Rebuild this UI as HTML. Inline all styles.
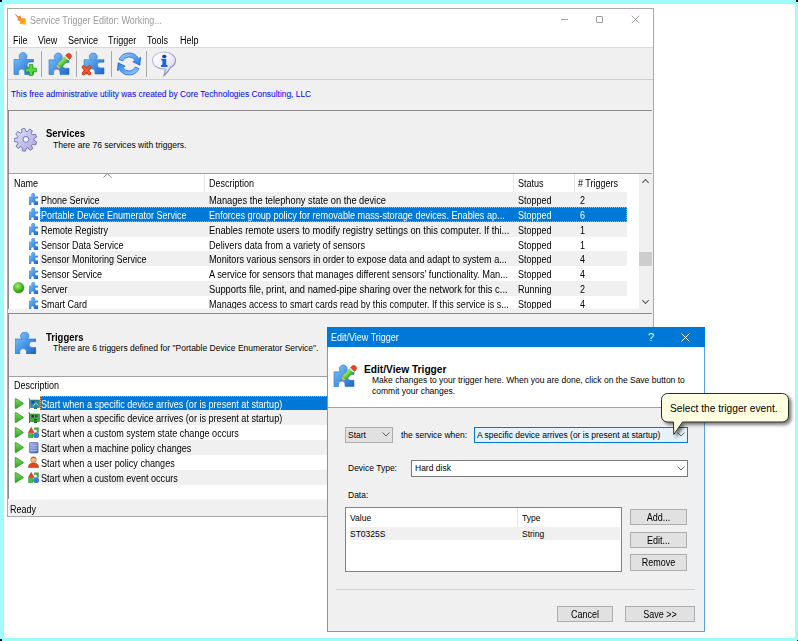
<!DOCTYPE html>
<html><head><meta charset="utf-8">
<style>
*{box-sizing:border-box}
html,body{margin:0;padding:0}
body{width:798px;height:641px;position:relative;overflow:hidden;background:#9ffcfc;font-family:"Liberation Sans",sans-serif;font-size:9px;color:#000}
.a{position:absolute}
.t{position:absolute;white-space:pre;line-height:15px;height:15px;transform-origin:0 0}
.bt{position:absolute;background:#e1e1e1;border:1px solid #adadad}
.bt span{position:absolute;left:0;right:0;top:0;text-align:center;white-space:pre;line-height:15px;font-size:10px;transform:scaleX(.9)}
</style></head>
<body>
<svg width="0" height="0" style="position:absolute">
<defs>
<linearGradient id="pz" x1="0" y1="0" x2="1" y2="1">
<stop offset="0" stop-color="#8cc8f8"/><stop offset="0.5" stop-color="#4a98e8"/><stop offset="1" stop-color="#1c64c8"/>
</linearGradient>
<radialGradient id="grn" cx="0.4" cy="0.35" r="0.65">
<stop offset="0" stop-color="#a8f070"/><stop offset="0.6" stop-color="#4cc020"/><stop offset="1" stop-color="#2a8a10"/>
</radialGradient>
<linearGradient id="play" x1="0" y1="0" x2="0" y2="1">
<stop offset="0" stop-color="#80e060"/><stop offset="1" stop-color="#2aa020"/>
</linearGradient>
<linearGradient id="pen" x1="0" y1="0" x2="0" y2="1">
<stop offset="0" stop-color="#9cf070"/><stop offset="1" stop-color="#3cb020"/>
</linearGradient>
<linearGradient id="srv" x1="0" y1="0" x2="1" y2="1">
<stop offset="0" stop-color="#a8b8e8"/><stop offset="1" stop-color="#5068b0"/>
</linearGradient>
<linearGradient id="rf" x1="0" y1="0" x2="1" y2="1">
<stop offset="0" stop-color="#9cd0ff"/><stop offset="1" stop-color="#2a7ae0"/>
</linearGradient>
<linearGradient id="ib" x1="0" y1="0" x2="1" y2="1">
<stop offset="0" stop-color="#ffffff"/><stop offset="0.5" stop-color="#f0f0fc"/><stop offset="1" stop-color="#c4c4e8"/>
</linearGradient>
<linearGradient id="ibs" x1="0" y1="0" x2="1" y2="1">
<stop offset="0" stop-color="#c8c8ec"/><stop offset="0.6" stop-color="#a0a0c8"/><stop offset="1" stop-color="#6a6a78"/>
</linearGradient>
<linearGradient id="gr" x1="0" y1="0" x2="1" y2="1">
<stop offset="0" stop-color="#e0e0f8"/><stop offset="1" stop-color="#a8a8dc"/>
</linearGradient>
</defs></svg>
<div class="a" style="left:4px;top:4px;width:791px;height:634px;background:#fff;border-radius:3px"></div>
<div class="a" style="left:0;top:0;width:2px;height:2px;background:#000"></div>
<div class="a" style="left:796px;top:0;width:2px;height:2px;background:#000"></div>
<div class="a" style="left:0;top:639px;width:2px;height:2px;background:#000"></div>
<div class="a" style="left:797px;top:640px;width:1px;height:1px;background:#000"></div>
<div class="a" style="left:7px;top:8px;width:647px;height:509px;border:1px solid #a9a9a9;background:#f0f0f0"></div>
<div class="a" style="left:8px;top:9px;width:645px;height:38px;background:#fff;"></div>
<svg class="a" style="left:14px;top:13px" width="13" height="13" viewBox="0 0 13 13"><defs><linearGradient id="ap" x1="0" y1="0" x2="1" y2="1"><stop offset="0" stop-color="#ff4a1a"/><stop offset="0.5" stop-color="#ff8a20"/><stop offset="1" stop-color="#ffc000"/></linearGradient></defs><path d="M0.5,0.5 L4.5,3.6 L6.2,2.6 L7.2,5.2 L11.8,5.4 L11.8,11.8 L5.2,10.4 L6.6,8.8 L3.2,6.8 L4.2,5.4 Z" fill="url(#ap)"/></svg>
<div class="t" style="left:30px;top:13px;font-size:10px;transform:scaleX(0.9);color:#9a9a9a;">Service Trigger Editor: Working...</div>
<div class="t" style="left:13px;top:33px;font-size:10px;transform:scaleX(0.9);">File</div>
<div class="t" style="left:38px;top:33px;font-size:10px;transform:scaleX(0.9);">View</div>
<div class="t" style="left:68px;top:33px;font-size:10px;transform:scaleX(0.9);">Service</div>
<div class="t" style="left:108px;top:33px;font-size:10px;transform:scaleX(0.9);">Trigger</div>
<div class="t" style="left:147px;top:33px;font-size:10px;transform:scaleX(0.9);">Tools</div>
<div class="t" style="left:180px;top:33px;font-size:10px;transform:scaleX(0.9);">Help</div>
<div class="a" style="left:561px;top:19px;width:7px;height:1px;background:#a0a0a0;"></div>
<div class="a" style="left:596px;top:16px;width:7px;height:7px;border:1px solid #a0a0a0;border-radius:1px"></div>
<svg class="a" style="left:631px;top:15px" width="9" height="9"><path d="M0.8,0.8L8.2,8.2M8.2,0.8L0.8,8.2" stroke="#909090" stroke-width="0.9"/></svg>
<div class="a" style="left:8px;top:47px;width:645px;height:1px;background:#d9d9d9;"></div>
<div class="a" style="left:8px;top:79px;width:645px;height:1px;background:#d0d0d0;"></div>
<div class="a" style="left:41px;top:51px;width:1px;height:26px;background:#a8a8a8;"></div>
<div class="a" style="left:76px;top:51px;width:1px;height:26px;background:#a8a8a8;"></div>
<div class="a" style="left:111px;top:51px;width:1px;height:26px;background:#a8a8a8;"></div>
<div class="a" style="left:146px;top:51px;width:1px;height:26px;background:#a8a8a8;"></div>
<svg class="a" style="left:10px;top:48px" width="32" height="32" viewBox="0 0 32 32"><path transform="translate(4,4.5) scale(0.975,1.000)" d="M0,7 H6.6 A4,4 0 1 1 11.9,7 H20 V9.6 H16.4 A3,3 0 0 0 16.4,15.6 H20 V22 H11 V19.75 A3.25,3.25 0 0 0 4.5,19.75 V22 H0 Z" fill="url(#pz)" stroke="#2a6fc9" stroke-width="0.6"/><path d="M19.2,16.6 h3.6 v3.6 h3.6 v3.6 h-3.6 v3.6 h-3.6 v-3.6 h-3.6 v-3.6 h3.6 z" fill="#5ad83a" stroke="#1e9a1e" stroke-width="0.8" stroke-linejoin="round"/></svg>
<svg class="a" style="left:44px;top:48px" width="32" height="32" viewBox="0 0 32 32"><path transform="translate(5,5) scale(1.000,0.977)" d="M0,7 H6.6 A4,4 0 1 1 11.9,7 H20 V9.6 H16.4 A3,3 0 0 0 16.4,15.6 H20 V22 H11 V19.75 A3.25,3.25 0 0 0 4.5,19.75 V22 H0 Z" fill="url(#pz)" stroke="#2a6fc9" stroke-width="0.6"/><g transform="translate(12.3,20.7) rotate(-45)"><path d="M0,0 L4,-2.7 L4,2.7 Z" fill="#d8b478"/><path d="M0,0 L1.4,-0.95 L1.4,0.95 Z" fill="#505050"/><rect x="4" y="-2.7" width="10.2" height="5.4" fill="url(#pen)" stroke="#2a8a1e" stroke-width="0.4"/><rect x="14.2" y="-2.7" width="1.6" height="5.4" fill="#e8e8e8"/><path d="M15.8,-2.8 H17.6 A2.8,2.8 0 0 1 17.6,2.8 H15.8 Z" fill="#e4461c" stroke="#b83010" stroke-width="0.4"/></g></svg>
<svg class="a" style="left:78px;top:48px" width="32" height="32" viewBox="0 0 32 32"><path transform="translate(6,5) scale(1.000,0.955)" d="M0,7 H6.6 A4,4 0 1 1 11.9,7 H20 V9.6 H16.4 A3,3 0 0 0 16.4,15.6 H20 V22 H11 V19.75 A3.25,3.25 0 0 0 4.5,19.75 V22 H0 Z" fill="url(#pz)" stroke="#2a6fc9" stroke-width="0.6"/><path d="M5.5,19 L11.5,25.5 M11.5,19 L5.5,25.5" stroke="#b82a10" stroke-width="3.4" stroke-linecap="round"/><path d="M5.5,19 L11.5,25.5 M11.5,19 L5.5,25.5" stroke="#f45a24" stroke-width="2.2" stroke-linecap="round"/></svg>
<svg class="a" style="left:113px;top:48px" width="32" height="32" viewBox="0 0 32 32"><path d="M6.03,11.35 A11,11 0 0 1 25.5,10.5 L27.6,9.3 L26.8,17.2 L19.8,13.8 L22.06,12.5 A7,7 0 0 0 9.66,13.04 Z" fill="url(#rf)" stroke="#1f6ad8" stroke-width="0.8" stroke-linejoin="round"/><g transform="rotate(180 16 16)"><path d="M6.03,11.35 A11,11 0 0 1 25.5,10.5 L27.6,9.3 L26.8,17.2 L19.8,13.8 L22.06,12.5 A7,7 0 0 0 9.66,13.04 Z" fill="url(#rf)" stroke="#1f6ad8" stroke-width="0.8" stroke-linejoin="round"/></g></svg>
<svg class="a" style="left:148px;top:48px" width="32" height="32" viewBox="0 0 32 32"><path d="M16,4 C22.5,4 27.5,7.8 27.5,12.5 C27.5,15.5 25.5,18 22.5,19.5 C21,22.5 18.5,25.5 16,27.5 C17,25 17.5,23 17,21 L16,21 C9.5,21 4.5,17.2 4.5,12.5 C4.5,7.8 9.5,4 16,4 Z" fill="url(#ib)" stroke="url(#ibs)" stroke-width="1.1"/><ellipse cx="16.3" cy="8.4" rx="2.2" ry="1.6" fill="#1a3aa0"/><path d="M13.2,10.8 H18.2 V17 H19.5 V19 H13 V17 H14.4 V12.6 H13.2 Z" fill="#1a66e0"/></svg>
<div class="t" style="left:11px;top:87px;font-size:8.4px;color:#0000f0;">This free administrative utility was created by Core Technologies Consulting, LLC</div>
<div class="a" style="left:8px;top:110px;width:644px;height:1px;background:#8c8c8c;"></div>
<div class="a" style="left:8px;top:110px;width:1px;height:199px;background:#8c8c8c;"></div>
<svg class="a" style="left:14px;top:128px" width="24" height="24" viewBox="0 0 24 24"><path d="M7.84,4.24 L7.70,1.05 L10.81,0.42 L11.93,3.41 L13.55,3.65 L15.50,1.12 L18.29,2.64 L17.22,5.65 L18.31,6.88 L21.43,6.19 L22.59,9.15 L19.84,10.77 L19.88,12.41 L22.71,13.89 L21.70,16.89 L18.55,16.37 L17.53,17.65 L18.75,20.60 L16.04,22.26 L13.96,19.83 L12.36,20.16 L11.39,23.20 L8.25,22.73 L8.23,19.54 L6.79,18.75 L4.09,20.46 L1.99,18.09 L4.02,15.62 L3.42,14.10 L0.26,13.67 L0.17,10.50 L3.31,9.92 L3.83,8.36 L1.68,6.01 L3.66,3.53 L6.44,5.10 Z" fill="url(#gr)" stroke="#6a6ab0" stroke-width="0.9" stroke-linejoin="round"/><circle cx="11.9" cy="11.4" r="2.9" fill="#f4f4f8" stroke="#6a6ab0" stroke-width="0.9"/></svg>
<div class="t" style="left:46px;top:126px;font-size:10px;transform:scaleX(0.95);font-weight:bold;">Services</div>
<div class="t" style="left:53px;top:138px;font-size:8.55px;">There are 76 services with triggers.</div>
<div class="a" style="left:9px;top:173px;width:643px;height:1px;background:#a0a0a0;"></div>
<div class="a" style="left:9px;top:174px;width:630px;height:135px;background:#fff;"></div>
<div class="a" style="left:639px;top:174px;width:13px;height:135px;background:#f0f0f0;"></div>
<div class="a" style="left:639px;top:252px;width:13px;height:14px;background:#cdcdcd;"></div>
<svg class="a" style="left:641px;top:178px" width="9" height="7"><path d="M1.3,4.8 L4.5,1.6 L7.7,4.8" fill="none" stroke="#606060" stroke-width="1.2"/></svg>
<svg class="a" style="left:641px;top:299px" width="9" height="7"><path d="M1.3,1.2 L4.5,4.4 L7.7,1.2" fill="none" stroke="#606060" stroke-width="1.2"/></svg>
<div class="a" style="left:204px;top:174px;width:1px;height:18px;background:#e5e5e5;"></div>
<div class="a" style="left:513px;top:174px;width:1px;height:18px;background:#e5e5e5;"></div>
<div class="a" style="left:574px;top:174px;width:1px;height:18px;background:#e5e5e5;"></div>
<svg class="a" style="left:103px;top:173px" width="9" height="5"><path d="M0.5,4.5 L4.5,0.8 L8.5,4.5" fill="none" stroke="#808080" stroke-width="1"/></svg>
<div class="t" style="left:14px;top:176px;font-size:10px;transform:scaleX(0.9);">Name</div>
<div class="t" style="left:209px;top:176px;font-size:10px;transform:scaleX(0.9);">Description</div>
<div class="t" style="left:518px;top:176px;font-size:10px;transform:scaleX(0.9);">Status</div>
<div class="t" style="left:578px;top:176px;font-size:10px;transform:scaleX(0.9);"># Triggers</div>
<div class="a" style="left:40px;top:192px;width:587px;height:15px;background:#f0f0f0;"></div>
<svg class="a" style="left:29px;top:193px" width="9" height="12" viewBox="0 0 20 22" preserveAspectRatio="none"><path d="M0,7 H6.6 A4,4 0 1 1 11.9,7 H20 V9.6 H16.4 A3,3 0 0 0 16.4,15.6 H20 V22 H11 V19.75 A3.25,3.25 0 0 0 4.5,19.75 V22 H0 Z" fill="url(#pz)" stroke="#2a6fc9" stroke-width="0.6"/></svg>
<div class="t" style="left:41px;top:193px;font-size:10px;transform:scaleX(0.9);">Phone Service</div>
<div class="t" style="left:209px;top:193px;font-size:10px;transform:scaleX(0.9279);">Manages the telephony state on the device</div>
<div class="t" style="left:518px;top:193px;font-size:10px;transform:scaleX(0.9);">Stopped</div>
<div class="t" style="left:580px;top:193px;font-size:10px;transform:scaleX(0.9);">2</div>
<div class="a" style="left:40px;top:207px;width:587px;height:15px;background:#0078d7;border:1px dotted #e0a060"></div>
<svg class="a" style="left:29px;top:208px" width="9" height="12" viewBox="0 0 20 22" preserveAspectRatio="none"><path d="M0,7 H6.6 A4,4 0 1 1 11.9,7 H20 V9.6 H16.4 A3,3 0 0 0 16.4,15.6 H20 V22 H11 V19.75 A3.25,3.25 0 0 0 4.5,19.75 V22 H0 Z" fill="url(#pz)" stroke="#2a6fc9" stroke-width="0.6"/></svg>
<div class="t" style="left:41px;top:208px;font-size:10px;transform:scaleX(0.9);color:#fff;">Portable Device Enumerator Service</div>
<div class="t" style="left:209px;top:208px;font-size:10px;transform:scaleX(0.9126000000000001);color:#fff;">Enforces group policy for removable mass-storage devices. Enables ap...</div>
<div class="t" style="left:518px;top:208px;font-size:10px;transform:scaleX(0.9);color:#fff;">Stopped</div>
<div class="t" style="left:580px;top:208px;font-size:10px;transform:scaleX(0.9);color:#fff;">6</div>
<div class="a" style="left:40px;top:222px;width:587px;height:15px;background:#f0f0f0;"></div>
<svg class="a" style="left:29px;top:223px" width="9" height="12" viewBox="0 0 20 22" preserveAspectRatio="none"><path d="M0,7 H6.6 A4,4 0 1 1 11.9,7 H20 V9.6 H16.4 A3,3 0 0 0 16.4,15.6 H20 V22 H11 V19.75 A3.25,3.25 0 0 0 4.5,19.75 V22 H0 Z" fill="url(#pz)" stroke="#2a6fc9" stroke-width="0.6"/></svg>
<div class="t" style="left:41px;top:223px;font-size:10px;transform:scaleX(0.9);">Remote Registry</div>
<div class="t" style="left:209px;top:223px;font-size:10px;transform:scaleX(0.9315);">Enables remote users to modify registry settings on this computer. If thi...</div>
<div class="t" style="left:518px;top:223px;font-size:10px;transform:scaleX(0.9);">Stopped</div>
<div class="t" style="left:580px;top:223px;font-size:10px;transform:scaleX(0.9);">1</div>
<svg class="a" style="left:29px;top:238px" width="9" height="12" viewBox="0 0 20 22" preserveAspectRatio="none"><path d="M0,7 H6.6 A4,4 0 1 1 11.9,7 H20 V9.6 H16.4 A3,3 0 0 0 16.4,15.6 H20 V22 H11 V19.75 A3.25,3.25 0 0 0 4.5,19.75 V22 H0 Z" fill="url(#pz)" stroke="#2a6fc9" stroke-width="0.6"/></svg>
<div class="t" style="left:41px;top:238px;font-size:10px;transform:scaleX(0.9);">Sensor Data Service</div>
<div class="t" style="left:209px;top:238px;font-size:10px;transform:scaleX(0.9144);">Delivers data from a variety of sensors</div>
<div class="t" style="left:518px;top:238px;font-size:10px;transform:scaleX(0.9);">Stopped</div>
<div class="t" style="left:580px;top:238px;font-size:10px;transform:scaleX(0.9);">1</div>
<div class="a" style="left:40px;top:251px;width:587px;height:15px;background:#f0f0f0;"></div>
<svg class="a" style="left:29px;top:252px" width="9" height="12" viewBox="0 0 20 22" preserveAspectRatio="none"><path d="M0,7 H6.6 A4,4 0 1 1 11.9,7 H20 V9.6 H16.4 A3,3 0 0 0 16.4,15.6 H20 V22 H11 V19.75 A3.25,3.25 0 0 0 4.5,19.75 V22 H0 Z" fill="url(#pz)" stroke="#2a6fc9" stroke-width="0.6"/></svg>
<div class="t" style="left:41px;top:252px;font-size:10px;transform:scaleX(0.9);">Sensor Monitoring Service</div>
<div class="t" style="left:209px;top:252px;font-size:10px;transform:scaleX(0.9144);">Monitors various sensors in order to expose data and adapt to system a...</div>
<div class="t" style="left:518px;top:252px;font-size:10px;transform:scaleX(0.9);">Stopped</div>
<div class="t" style="left:580px;top:252px;font-size:10px;transform:scaleX(0.9);">4</div>
<svg class="a" style="left:29px;top:267px" width="9" height="12" viewBox="0 0 20 22" preserveAspectRatio="none"><path d="M0,7 H6.6 A4,4 0 1 1 11.9,7 H20 V9.6 H16.4 A3,3 0 0 0 16.4,15.6 H20 V22 H11 V19.75 A3.25,3.25 0 0 0 4.5,19.75 V22 H0 Z" fill="url(#pz)" stroke="#2a6fc9" stroke-width="0.6"/></svg>
<div class="t" style="left:41px;top:267px;font-size:10px;transform:scaleX(0.9);">Sensor Service</div>
<div class="t" style="left:209px;top:267px;font-size:10px;transform:scaleX(0.9260999999999999);">A service for sensors that manages different sensors' functionality. Man...</div>
<div class="t" style="left:518px;top:267px;font-size:10px;transform:scaleX(0.9);">Stopped</div>
<div class="t" style="left:580px;top:267px;font-size:10px;transform:scaleX(0.9);">4</div>
<div class="a" style="left:40px;top:281px;width:587px;height:15px;background:#f0f0f0;"></div>
<svg class="a" style="left:29px;top:282px" width="9" height="12" viewBox="0 0 20 22" preserveAspectRatio="none"><path d="M0,7 H6.6 A4,4 0 1 1 11.9,7 H20 V9.6 H16.4 A3,3 0 0 0 16.4,15.6 H20 V22 H11 V19.75 A3.25,3.25 0 0 0 4.5,19.75 V22 H0 Z" fill="url(#pz)" stroke="#2a6fc9" stroke-width="0.6"/></svg>
<svg class="a" style="left:13px;top:282px" width="12" height="12" viewBox="0 0 12 12"><circle cx="5.7" cy="5.7" r="5.3" fill="url(#grn)" stroke="#3a9a20" stroke-width="0.5"/></svg>
<div class="t" style="left:41px;top:282px;font-size:10px;transform:scaleX(0.9);">Server</div>
<div class="t" style="left:209px;top:282px;font-size:10px;transform:scaleX(0.9342);">Supports file, print, and named-pipe sharing over the network for this c...</div>
<div class="t" style="left:518px;top:282px;font-size:10px;transform:scaleX(0.9);">Running</div>
<div class="t" style="left:580px;top:282px;font-size:10px;transform:scaleX(0.9);">2</div>
<svg class="a" style="left:29px;top:297px" width="9" height="12" viewBox="0 0 20 22" preserveAspectRatio="none"><path d="M0,7 H6.6 A4,4 0 1 1 11.9,7 H20 V9.6 H16.4 A3,3 0 0 0 16.4,15.6 H20 V22 H11 V19.75 A3.25,3.25 0 0 0 4.5,19.75 V22 H0 Z" fill="url(#pz)" stroke="#2a6fc9" stroke-width="0.6"/></svg>
<div class="t" style="left:41px;top:297px;font-size:10px;transform:scaleX(0.9);">Smart Card</div>
<div class="t" style="left:209px;top:297px;font-size:10px;transform:scaleX(0.9098999999999999);">Manages access to smart cards read by this computer. If this service is s...</div>
<div class="t" style="left:518px;top:297px;font-size:10px;transform:scaleX(0.9);">Stopped</div>
<div class="t" style="left:580px;top:297px;font-size:10px;transform:scaleX(0.9);">4</div>
<div class="a" style="left:9px;top:309px;width:643px;height:4px;background:#f0f0f0;"></div>
<div class="a" style="left:8px;top:313px;width:644px;height:1px;background:#8c8c8c;"></div>
<div class="a" style="left:8px;top:313px;width:1px;height:186px;background:#8c8c8c;"></div>
<svg class="a" style="left:15px;top:332px" width="21" height="22" viewBox="0 0 20 22" preserveAspectRatio="none"><path d="M0,7 H6.6 A4,4 0 1 1 11.9,7 H20 V9.6 H16.4 A3,3 0 0 0 16.4,15.6 H20 V22 H11 V19.75 A3.25,3.25 0 0 0 4.5,19.75 V22 H0 Z" fill="url(#pz)" stroke="#2a6fc9" stroke-width="0.6"/></svg>
<div class="t" style="left:46px;top:330px;font-size:10px;transform:scaleX(0.95);font-weight:bold;">Triggers</div>
<div class="t" style="left:53px;top:341px;font-size:8.5px;">There are 6 triggers defined for "Portable Device Enumerator Service".</div>
<div class="a" style="left:9px;top:376px;width:643px;height:1px;background:#a0a0a0;"></div>
<div class="a" style="left:9px;top:377px;width:643px;height:122px;background:#fff;"></div>
<div class="t" style="left:14px;top:378px;font-size:10px;transform:scaleX(0.9);">Description</div>
<div class="a" style="left:40px;top:396px;width:290px;height:15px;background:#0078d7;border:1px dotted #e0a060;border-right:none"></div>
<svg class="a" style="left:14px;top:398px" width="10" height="11" viewBox="0 0 10 11"><path d="M1.2,1 Q1.2,0.2 2,0.6 L9,5 Q9.6,5.5 9,6 L2,10.4 Q1.2,10.8 1.2,10 Z" fill="url(#play)" stroke="#2a8a1a" stroke-width="0.7"/></svg>
<div class="t" style="left:41px;top:397px;font-size:10px;transform:scaleX(0.908);color:#fff;">Start when a specific device arrives (or is present at startup)</div>
<div class="a" style="left:40px;top:410px;width:290px;height:15px;background:#f0f0f0;"></div>
<svg class="a" style="left:14px;top:412px" width="10" height="11" viewBox="0 0 10 11"><path d="M1.2,1 Q1.2,0.2 2,0.6 L9,5 Q9.6,5.5 9,6 L2,10.4 Q1.2,10.8 1.2,10 Z" fill="url(#play)" stroke="#2a8a1a" stroke-width="0.7"/></svg>
<div class="t" style="left:41px;top:411px;font-size:10px;transform:scaleX(0.908);">Start when a specific device arrives (or is present at startup)</div>
<svg class="a" style="left:14px;top:427px" width="10" height="11" viewBox="0 0 10 11"><path d="M1.2,1 Q1.2,0.2 2,0.6 L9,5 Q9.6,5.5 9,6 L2,10.4 Q1.2,10.8 1.2,10 Z" fill="url(#play)" stroke="#2a8a1a" stroke-width="0.7"/></svg>
<div class="t" style="left:41px;top:426px;font-size:10px;transform:scaleX(0.908);">Start when a custom system state change occurs</div>
<div class="a" style="left:40px;top:440px;width:290px;height:15px;background:#f0f0f0;"></div>
<svg class="a" style="left:14px;top:442px" width="10" height="11" viewBox="0 0 10 11"><path d="M1.2,1 Q1.2,0.2 2,0.6 L9,5 Q9.6,5.5 9,6 L2,10.4 Q1.2,10.8 1.2,10 Z" fill="url(#play)" stroke="#2a8a1a" stroke-width="0.7"/></svg>
<div class="t" style="left:41px;top:441px;font-size:10px;transform:scaleX(0.908);">Start when a machine policy changes</div>
<svg class="a" style="left:14px;top:457px" width="10" height="11" viewBox="0 0 10 11"><path d="M1.2,1 Q1.2,0.2 2,0.6 L9,5 Q9.6,5.5 9,6 L2,10.4 Q1.2,10.8 1.2,10 Z" fill="url(#play)" stroke="#2a8a1a" stroke-width="0.7"/></svg>
<div class="t" style="left:41px;top:456px;font-size:10px;transform:scaleX(0.908);">Start when a user policy changes</div>
<div class="a" style="left:40px;top:470px;width:290px;height:15px;background:#f0f0f0;"></div>
<svg class="a" style="left:14px;top:472px" width="10" height="11" viewBox="0 0 10 11"><path d="M1.2,1 Q1.2,0.2 2,0.6 L9,5 Q9.6,5.5 9,6 L2,10.4 Q1.2,10.8 1.2,10 Z" fill="url(#play)" stroke="#2a8a1a" stroke-width="0.7"/></svg>
<div class="t" style="left:41px;top:471px;font-size:10px;transform:scaleX(0.908);">Start when a custom event occurs</div>
<svg class="a" style="left:28px;top:398px" width="12" height="12" viewBox="0 0 12 12"><path d="M0.3,0.5 H2 V11 H1 V1.3 H0.3 Z" fill="#3a8ae0"/><rect x="2.5" y="2" width="9" height="7.6" fill="#2a8c96" stroke="#1a5a7a" stroke-width="0.5"/><rect x="3.5" y="3" width="3" height="2.5" fill="#204aa0"/><path d="M5,8.5 L7.5,5 L10.5,7.5" stroke="#a8e0f0" fill="none" stroke-width="0.9"/><rect x="6" y="9.6" width="3" height="1.4" fill="#1a6a6a"/></svg>
<svg class="a" style="left:28px;top:412px" width="12" height="12" viewBox="0 0 12 12"><path d="M0.3,0.5 H2 V11 H1 V1.3 H0.3 Z" fill="#606060"/><rect x="2.5" y="2" width="9" height="7.6" fill="#3cb03c" stroke="#1a6a1a" stroke-width="0.5"/><rect x="3.5" y="3" width="2.4" height="2.4" fill="#402050"/><rect x="7" y="3" width="2.4" height="2.4" fill="#603070"/><path d="M6,7 h3 v1.5 h-3 z" fill="#186018"/><rect x="6" y="9.6" width="3" height="1.4" fill="#186018"/></svg>
<svg class="a" style="left:28px;top:427px" width="11" height="11" viewBox="0 0 11 11"><path d="M3.2,0.3 L6.2,5.8 L0.2,5.8 Z" fill="#e8401c" stroke="#a02010" stroke-width="0.4"/><path d="M6.5,0.8 h4 v4.5 h-1.5 v-2.5 h-2.5 z" fill="#44c030" stroke="#1a7a1a" stroke-width="0.4"/><path d="M0.5,6.5 h4.5 v4.3 h-4.5 z" fill="#3cc03c" stroke="#1a7a1a" stroke-width="0.4"/><circle cx="8.2" cy="8.3" r="2.7" fill="#3a80e0" stroke="#1a50a0" stroke-width="0.4"/></svg>
<svg class="a" style="left:29px;top:442px" width="10" height="12" viewBox="0 0 10 12"><rect x="0.5" y="0.5" width="8.6" height="10.6" rx="1" fill="url(#srv)" stroke="#4a5a98" stroke-width="0.6"/><path d="M1.5,3.6 H8.3 M1.5,6 H8.3 M1.5,8.4 H8.3" stroke="#a8c0f0" stroke-width="0.9"/></svg>
<svg class="a" style="left:28px;top:456px" width="11" height="12" viewBox="0 0 11 12"><circle cx="5.5" cy="3.6" r="2.9" fill="#f4b878" stroke="#a86020" stroke-width="0.5"/><path d="M2.6,2.6 Q5.5,-0.5 8.4,2.6 Q5.5,1.6 2.6,2.6 Z" fill="#a05a20"/><path d="M0.5,11.5 C0.5,8 2.5,7 5.5,7 C8.5,7 10.5,8 10.5,11.5 Z" fill="#e04a1c" stroke="#a02a10" stroke-width="0.5"/></svg>
<svg class="a" style="left:28px;top:472px" width="11" height="11" viewBox="0 0 11 11"><path d="M3.2,0.3 L6.2,5.8 L0.2,5.8 Z" fill="#e8401c" stroke="#a02010" stroke-width="0.4"/><path d="M6.5,0.8 h4 v4.5 h-1.5 v-2.5 h-2.5 z" fill="#44c030" stroke="#1a7a1a" stroke-width="0.4"/><path d="M0.5,6.5 h4.5 v4.3 h-4.5 z" fill="#3cc03c" stroke="#1a7a1a" stroke-width="0.4"/><circle cx="8.2" cy="8.3" r="2.7" fill="#3a80e0" stroke="#1a50a0" stroke-width="0.4"/></svg>
<div class="a" style="left:8px;top:499px;width:645px;height:1px;background:#f8f8f8;"></div>
<div class="t" style="left:10px;top:502px;font-size:10px;transform:scaleX(0.9);">Ready</div>
<div class="a" style="left:327px;top:327px;width:378px;height:305px;background:#f0f0f0;border:1px solid #5aa2e4;border-top:none"></div>
<div class="a" style="left:327px;top:327px;width:378px;height:20px;background:#0078d7;"></div>
<div class="t" style="left:331px;top:330px;font-size:10px;transform:scaleX(0.9);color:#fff;">Edit/View Trigger</div>
<div class="t" style="left:648px;top:330px;font-size:11px;color:#fff;">?</div>
<svg class="a" style="left:681px;top:333px" width="9" height="9"><path d="M0.5,0.5L8.5,8.5M8.5,0.5L0.5,8.5" stroke="#fff" stroke-width="1"/></svg>
<div class="a" style="left:328px;top:347px;width:376px;height:60px;background:#fff;"></div>
<div class="a" style="left:328px;top:407px;width:376px;height:1px;background:#a0a0a0;"></div>
<svg class="a" style="left:329px;top:360px" width="32" height="32" viewBox="0 0 32 32"><path transform="translate(5,5) scale(1.000,0.977)" d="M0,7 H6.6 A4,4 0 1 1 11.9,7 H20 V9.6 H16.4 A3,3 0 0 0 16.4,15.6 H20 V22 H11 V19.75 A3.25,3.25 0 0 0 4.5,19.75 V22 H0 Z" fill="url(#pz)" stroke="#2a6fc9" stroke-width="0.6"/><g transform="translate(12.3,20.7) rotate(-45)"><path d="M0,0 L4,-2.7 L4,2.7 Z" fill="#d8b478"/><path d="M0,0 L1.4,-0.95 L1.4,0.95 Z" fill="#505050"/><rect x="4" y="-2.7" width="10.2" height="5.4" fill="url(#pen)" stroke="#2a8a1e" stroke-width="0.4"/><rect x="14.2" y="-2.7" width="1.6" height="5.4" fill="#e8e8e8"/><path d="M15.8,-2.8 H17.6 A2.8,2.8 0 0 1 17.6,2.8 H15.8 Z" fill="#e4461c" stroke="#b83010" stroke-width="0.4"/></g></svg>
<div class="t" style="left:364px;top:362px;font-size:10.2px;font-weight:bold;">Edit/View Trigger</div>
<div class="t" style="left:372px;top:373px;font-size:8.5px;">Make changes to your trigger here. When you are done, click on the Save button to</div>
<div class="t" style="left:372px;top:384px;font-size:8.5px;">commit your changes.</div>
<div class="a" style="left:345px;top:427px;width:48px;height:16px;background:#e1e1e1;border:1px solid #adadad"></div>
<div class="t" style="left:348px;top:428px;font-size:8.5px;">Start</div>
<svg class="a" style="left:382px;top:432px" width="8" height="5"><path d="M0.5,0.5 L4,4 L7.5,0.5" fill="none" stroke="#505050" stroke-width="0.9"/></svg>
<div class="t" style="left:401px;top:428px;font-size:8.5px;">the service when:</div>
<div class="a" style="left:474px;top:427px;width:214px;height:16px;background:#e5f1fb;border:1px solid #0078d7"></div>
<div class="t" style="left:477px;top:428px;font-size:8.5px;">A specific device arrives (or is present at startup)</div>
<svg class="a" style="left:677px;top:432px" width="8" height="5"><path d="M0.5,0.5 L4,4 L7.5,0.5" fill="none" stroke="#505050" stroke-width="0.9"/></svg>
<div class="t" style="left:348px;top:461px;font-size:8.5px;">Device Type:</div>
<div class="a" style="left:411px;top:460px;width:277px;height:17px;background:#fff;border:1px solid #7a7a7a"></div>
<div class="t" style="left:415px;top:461px;font-size:8.5px;">Hard disk</div>
<svg class="a" style="left:677px;top:466px" width="8" height="5"><path d="M0.5,0.5 L4,4 L7.5,0.5" fill="none" stroke="#505050" stroke-width="0.9"/></svg>
<div class="t" style="left:348px;top:488px;font-size:8.5px;">Data:</div>
<div class="a" style="left:345px;top:507px;width:277px;height:65px;background:#fff;border:1px solid #828282"></div>
<div class="a" style="left:517px;top:508px;width:1px;height:19px;background:#e5e5e5;"></div>
<div class="t" style="left:350px;top:511px;font-size:8.5px;">Value</div>
<div class="t" style="left:522px;top:511px;font-size:8.5px;">Type</div>
<div class="a" style="left:350px;top:527px;width:270px;height:13px;background:#f0f0f0;"></div>
<div class="t" style="left:350px;top:527px;font-size:8.5px;">ST0325S</div>
<div class="t" style="left:522px;top:527px;font-size:8.5px;">String</div>
<div class="bt" style="left:630px;top:509px;width:57px;height:16px"><span style="top:0px">Add...</span></div>
<div class="bt" style="left:630px;top:532px;width:57px;height:16px"><span style="top:0px">Edit...</span></div>
<div class="bt" style="left:630px;top:554px;width:57px;height:17px"><span style="top:0px">Remove</span></div>
<div class="a" style="left:336px;top:589px;width:359px;height:1px;background:#d0d0d0;"></div>
<div class="bt" style="left:557px;top:606px;width:56px;height:16px"><span style="top:0px">Cancel</span></div>
<div class="bt" style="left:625px;top:606px;width:70px;height:16px"><span style="top:0px">Save &gt;&gt;</span></div>
<svg class="a" style="left:658px;top:390px" width="140" height="50" viewBox="0 0 140 50"><defs><filter id="sh" x="-10%" y="-10%" width="130%" height="150%"><feDropShadow dx="2.5" dy="2.5" stdDeviation="1.6" flood-color="#000" flood-opacity="0.5"/></filter></defs><path d="M9.5,3.5 H124.5 A6,6 0 0 1 130.5,9.5 V26 A6,6 0 0 1 124.5,32 H24.5 L15.8,44.5 L15.5,32 H9.5 A6,6 0 0 1 3.5,26 V9.5 A6,6 0 0 1 9.5,3.5 Z" fill="#ffffe1" stroke="#2a2a2a" stroke-width="1" filter="url(#sh)"/></svg>
<div class="t" style="left:670px;top:401px;font-size:10.2px;">Select the trigger event.</div>
</body></html>
